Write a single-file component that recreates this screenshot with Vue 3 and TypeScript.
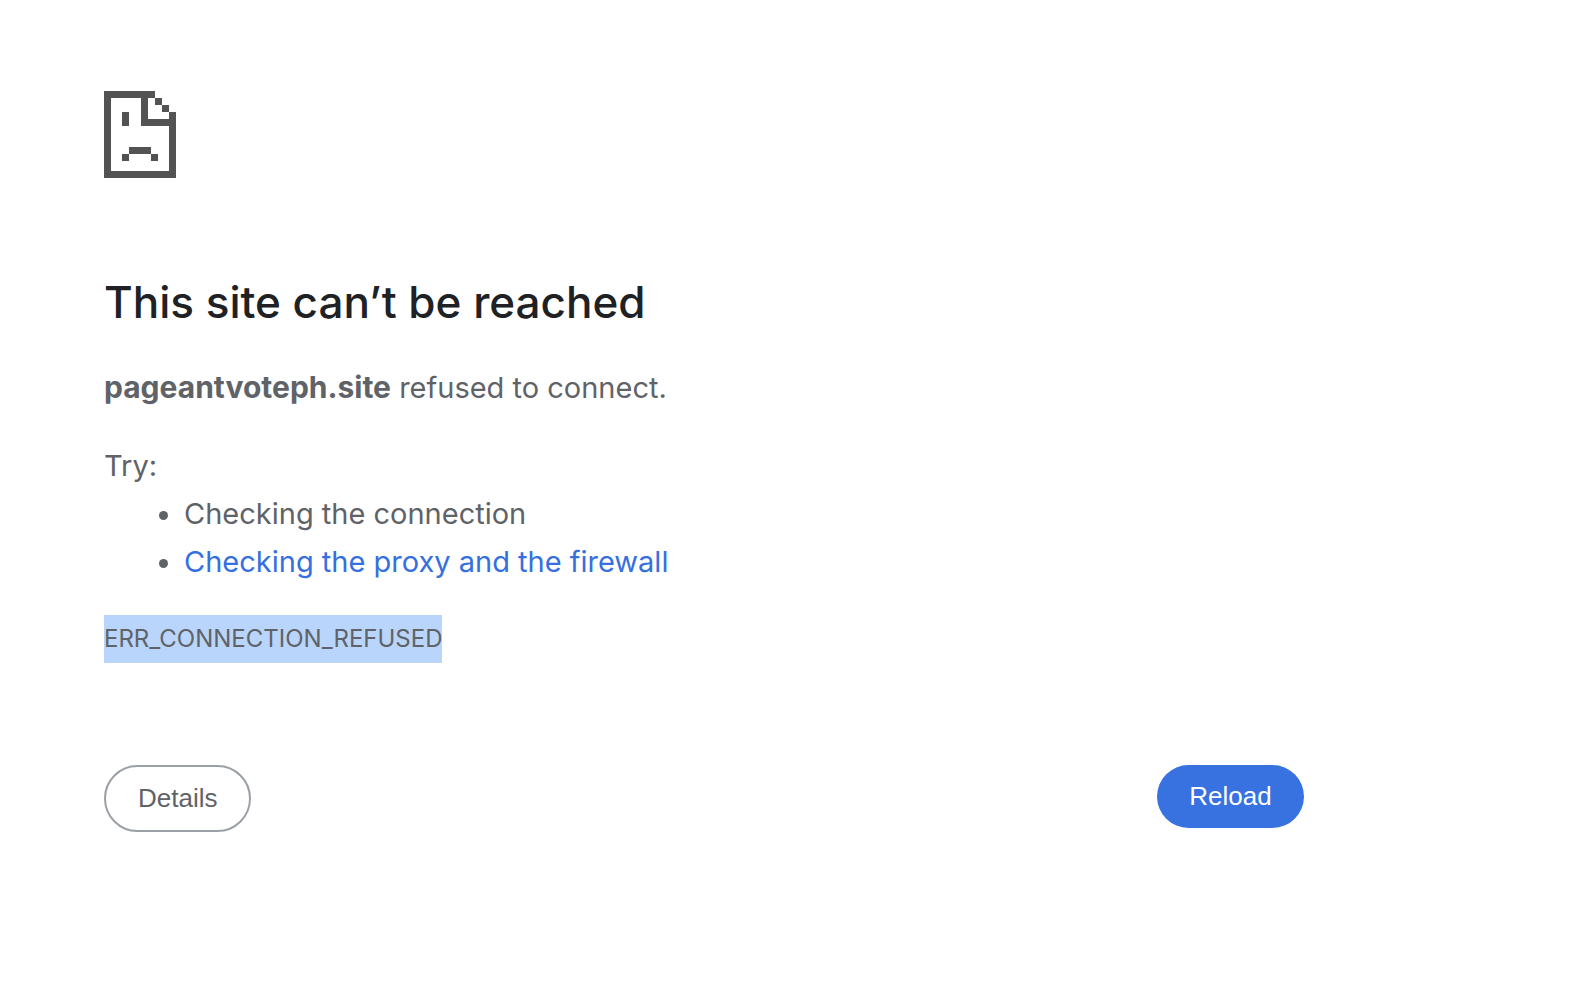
<script setup lang="ts">
const host: string = 'pageantvoteph.site'
const errorCode: string = 'ERR_CONNECTION_REFUSED'

function reload(): void {
  window.location.reload()
}
</script>

<template>
  <main class="page">
    <svg class="icon" viewBox="0 0 72 87" shape-rendering="crispEdges" aria-hidden="true">
      <path
        fill="#535353"
        d="M0 0H51V7H44V28H65V21H72V87H0ZM7 7V80H65V35H37V7ZM51 7H58V14H51ZM58 14H65V21H58ZM18 21H25V35H18ZM25 56H47V63H25ZM18 63H25V70H18ZM47 63H54V70H47Z"
      />
    </svg>
    <h1>This site can’t be reached</h1>
    <p class="summary"><strong>{{ host }}</strong> refused to connect.</p>
    <p class="try">Try:</p>
    <ul>
      <li>Checking the connection</li>
      <li><a href="#buttons">Checking the proxy and the firewall</a></li>
    </ul>
    <p class="code"><span>{{ errorCode }}</span></p>
    <div id="buttons" class="buttons">
      <button type="button" class="details">Details</button>
      <button type="button" class="reload" @click="reload">Reload</button>
    </div>
  </main>
</template>

<style>
body {
  margin: 0;
  background: #fff;
}
</style>

<style scoped>
.page {
  box-sizing: border-box;
  max-width: 1304px;
  padding: 91px 0 40px 104px;
  color: #5f6368;
  font-family: Inter, "Liberation Sans", sans-serif;
  font-size: 29px;
  line-height: 48px;
}
.icon {
  display: block;
  width: 72px;
  height: 87px;
}
h1 {
  margin: 94px 0 31px;
  color: #202124;
  font-size: 44px;
  font-weight: 500;
  line-height: 60px;
}
p {
  margin: 0;
}
.summary {
  margin-bottom: 30px;
}
.summary strong {
  font-size: 30px;
}
ul {
  margin: 0 0 29px;
  padding-left: 80px;
}
a {
  color: #366fe0;
  text-decoration: none;
}
.code {
  font-size: 24px;
}
.code span {
  display: inline-block;
  background: #b9d5fb;
}
.buttons {
  display: flex;
  align-items: flex-start;
  justify-content: space-between;
  margin-top: 102px;
}
button {
  min-width: 147px;
  border-radius: 34px;
  font-family: "Liberation Sans", Arial, sans-serif;
  font-size: 26px;
  line-height: 31px;
  cursor: pointer;
}
.details {
  padding: 16px 32px;
  border: 2px solid #9aa0a6;
  background: #fff;
  color: #5f6368;
}
.reload {
  padding: 16px 32px;
  border: 0;
  background: #3871e0;
  color: #fff;
}
</style>
